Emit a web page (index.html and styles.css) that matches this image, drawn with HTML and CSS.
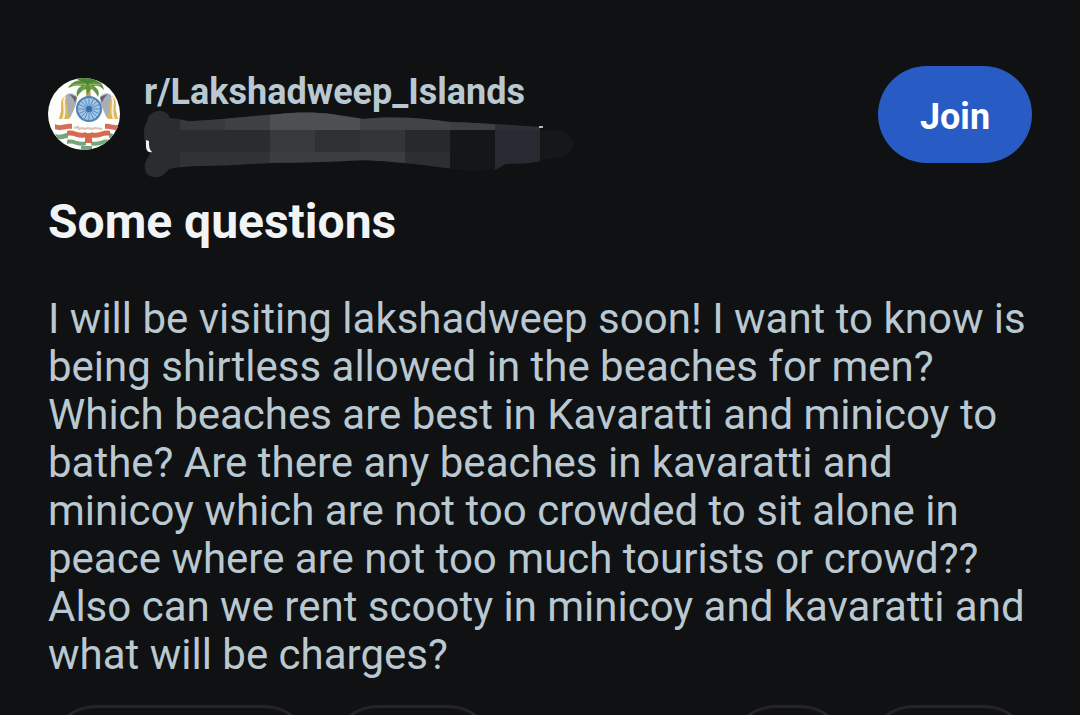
FILE: index.html
```html
<!DOCTYPE html>
<html lang="en">

<head>
    <meta charset="UTF-8">
    <meta name="viewport" content="width=device-width, initial-scale=1.0">
    <title>Some questions</title>
    <link rel="stylesheet" href="styles.css">
</head>

<body>
    <article class="post">
        <header class="post-header">
            <svg class="avatar" viewBox="0 0 72 72" aria-hidden="true">
                <defs>
                    <clipPath id="round">
                        <circle cx="36" cy="36" r="36" />
                    </clipPath>
                </defs>
                <g clip-path="url(#round)">
                    <rect width="72" height="72" fill="#fdfdfb" />
                    <!-- palm -->
                    <path d="M39 6L42 7L43 20L38 20Z" fill="#b9a34c" />
                    <path d="M40 4C32 0 24 3 20 10C26 7 30 7 34 8C29 10 28 14 29 19C32 14 35 12 38 11L39 17L43 11C46 12 48 15 50 19C52 14 50 11 46 8C50 7 53 9 56 12C55 4 49 0 40 4Z" fill="#5c9440" />
                    <path d="M27 0L40 7L53 0Z" fill="#4b8434" />
                    <path d="M25 7L38 6L33 14M53 7L41 6L47 14" fill="none" stroke="#9cb862" />
                    <!-- fish -->
                    <path d="M18 17C22 14 28 16 29 20C29 25 26 32 22 40L14 38C19 31 15 24 18 17Z" fill="#a9adb5" />
                    <path d="M17 18C11 22 14 28 13 33L11 41L21 41C22 37 18 34 20 28Z" fill="#deb557" />
                    <path d="M17 19C14 25 19 32 15 41" fill="none" stroke="#f6efdd" stroke-width="2" />
                    <path d="M21 16L29 19L27 25C26 21 24 19 21 16Z" fill="#62666f" />
                    <path d="M63 17C59 14 53 16 52 20C52 25 55 32 59 40L67 38C62 31 66 24 63 17Z" fill="#a9adb5" />
                    <path d="M64 18C70 22 67 28 68 33L70 41L60 41C59 37 63 34 61 28Z" fill="#deb557" />
                    <path d="M64 19C67 25 62 32 66 41" fill="none" stroke="#f6efdd" stroke-width="2" />
                    <path d="M60 16L52 19L54 25C55 21 57 19 60 16Z" fill="#62666f" />
                    <!-- chakra -->
                    <circle cx="41" cy="31" r="12" fill="#a4c4e2" stroke="#4a80b6" stroke-width="2" />
                    <path d="M41 19V43M29 31H53M33 23L49 39M33 39L49 23M36 20L46 42M46 20L36 42M30 26L52 36M30 36L52 26" stroke="#5a90c6" />
                    <circle cx="41" cy="31" r="3" fill="#3570ad" />
                    <!-- ribbons -->
                    <path d="M7 46C13 49 17 45 24 46V51C17 50 13 54 7 51Z" fill="#d4705a" />
                    <path d="M7 55C11 59 15 55 20 55V60C15 60 13 63 9 60Z" fill="#75a57a" />
                    <path d="M72 46C66 49 63 45 57 46V51C63 50 67 54 72 51Z" fill="#d4705a" />
                    <path d="M71 55C68 59 65 55 61 55V60C65 60 66 63 70 60Z" fill="#75a57a" />
                    <path d="M19 53C26 51 31 57 38 54V59C31 62 26 56 19 58Z" fill="#d86a50" />
                    <path d="M62 53C55 51 50 57 43 54V59C50 62 55 56 62 58Z" fill="#d86a50" />
                    <path d="M19 62C26 60 31 66 38 63V67C31 70 26 64 19 66Z" fill="#75a57a" />
                    <path d="M62 62C55 60 50 66 43 63V67C50 70 55 64 62 66Z" fill="#75a57a" />
                    <path d="M37 55H44V65H37Z" fill="#d86a50" />
                    <path d="M33 68H44V72H33Z" fill="#75a57a" />
                    <path d="M26 50L30 49L31 51L34 50L37 51L40 50L44 51L47 50L54 51" fill="none" stroke="#dcc3b4" stroke-width="2" />
                </g>
            </svg>
            <div class="community">
                <a class="community-name" href="#">r/Lakshadweep_Islands</a>
                <!-- author name, scribbled out -->
                <svg class="redacted" viewBox="0 0 430 70" aria-hidden="true">
                    <defs>
                        <clipPath id="stroke">
                            <path d="M14 1C19 0 24 3 26 8C34 8 42 12 50 11C80 9 108 6 136 4C150 2 173 2 187 4L220 9C250 6 280 8 306 12C335 13 365 15 396 17L396 51C384 54 370 53 361 54C356 57 352 61 346 60C330 60 305 59 280 55C250 52 222 49 202 51C168 53 138 52 105 54C75 57 48 54 25 59C20 66 15 68 9 67C3 66 0 61 1 54C2 49 6 46 6 42C1 37 0 30 0 22C0 16 3 13 4 8C6 4 10 1 14 1Z" />
                        </clipPath>
                    </defs>
                    <path d="M396 21H414C421 21 429 27 429 34C429 41 423 47 413 48L396 50Z" fill="#161719" />
                    <g clip-path="url(#stroke)">
                        <rect width="400" height="70" fill="#2b2c2e" />
                        <rect x="36" width="45" height="20" fill="#37393c" />
                        <rect x="81" width="45" height="20" fill="#3d4144" />
                        <rect x="126" width="90" height="20" fill="#4d5052" />
                        <rect x="216" width="90" height="20" fill="#414446" />
                        <rect x="306" width="45" height="20" fill="#3c4042" />
                        <rect x="351" width="45" height="20" fill="#2d3033" />
                        <rect x="126" y="20" width="45" height="22" fill="#38393b" />
                        <rect x="171" y="20" width="45" height="22" fill="#2f3033" />
                        <rect x="216" y="20" width="45" height="22" fill="#343537" />
                        <rect x="261" y="20" width="45" height="22" fill="#28292b" />
                        <rect x="36" y="42" width="90" height="20" fill="#313234" />
                        <rect x="126" y="42" width="135" height="20" fill="#3c3d3f" />
                        <rect x="261" y="42" width="45" height="20" fill="#2d2e30" />
                        <rect x="306" y="20" width="45" height="45" fill="#14161a" />
                        <rect x="351" y="20" width="45" height="45" fill="#272a30" />
                    </g>
                    <path d="M2 30L5 31C5 36 5 39 8 42C4 43 2 40 2 36Z" fill="#eef0f2" />
                    <rect x="395" y="16" width="4" height="2" fill="#b4b8ba" />
                </svg>
            </div>
            <button class="join" type="button">Join</button>
        </header>
        <h1 class="title">Some questions</h1>
        <p class="text">I will be visiting lakshadweep soon! I want to know is being shirtless allowed in the beaches for men? Which beaches are best in Kavaratti and minicoy to bathe? Are there any beaches in kavaratti and minicoy which are not too crowded to sit alone in peace where are not too much tourists or crowd?? Also can we rent scooty in minicoy and kavaratti and what will be charges?</p>
        <footer class="actions">
            <button class="action vote" type="button" aria-label="Vote"></button>
            <button class="action comments" type="button" aria-label="Comments"></button>
            <button class="action award" type="button" aria-label="Award"></button>
            <button class="action share" type="button" aria-label="Share"></button>
        </footer>
    </article>
</body>

</html>
```
FILE: styles.css
```css
* {
    padding: 0;
    margin: 0;
    box-sizing: border-box;
}

body {
    font-family: Roboto, sans-serif;
    background-color: #101113;
    color: #b9c8d1;
    height: 100vh;
    overflow: hidden;
}

a {
    color: inherit;
    text-decoration: none;
}

button {
    font-family: inherit;
    cursor: pointer;
}

.post {
    display: flex;
    flex-direction: column;
    height: 100vh;
    padding: 66px 48px 0;
}

/* header */

.post-header {
    display: flex;
    align-items: flex-start;
}

.avatar {
    width: 72px;
    height: 72px;
    margin: 12px 24px 0 0;
    flex: none;
}

.community {
    flex: 1;
    padding-top: 8px;
}

.community-name {
    display: block;
    font-size: 36px;
    font-weight: 700;
    line-height: 36px;
}

.redacted {
    display: block;
    width: 430px;
    height: 70px;
}

.join {
    width: 154px;
    height: 97px;
    border: 0;
    border-radius: 49px;
    background-color: #295bc4;
    color: #fff;
    font-size: 36px;
    font-weight: 700;
    padding-top: 4px;
}

/* content */

.title {
    margin-top: 14px;
    color: #f2f3f5;
    font-size: 48px;
    font-weight: 700;
    line-height: 56px;
}

.text {
    margin-top: 45px;
    font-size: 42px;
    line-height: 48px;
}

/* action bar */

.actions {
    display: flex;
    flex: 1;
    gap: 18px;
    min-height: 0;
    margin-top: 26px;
    overflow: hidden;
}

.action {
    flex: none;
    height: 96px;
    border: 3px solid #232427;
    border-radius: 48px;
    background: none;
}

.vote {
    width: 264px;
}

.comments,
.share {
    width: 166px;
}

.award {
    width: 120px;
    margin-left: auto;
}
```
